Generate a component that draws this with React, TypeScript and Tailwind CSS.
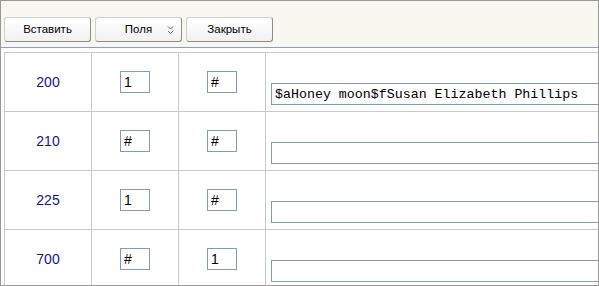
const rows = [
  { tag: "200", ind1: "1", ind2: "#", value: "$aHoney moon$fSusan Elizabeth Phillips" },
  { tag: "210", ind1: "#", ind2: "#", value: "" },
  { tag: "225", ind1: "1", ind2: "#", value: "" },
  { tag: "700", ind1: "#", ind2: "1", value: "" },
];

function ToolButton({ label, menu }: { label: string; menu?: boolean }) {
  return (
    <button className="relative flex h-[25px] w-[87px] items-center justify-center rounded-[3px] border border-[#cfcfcf] border-b-[#8c8c8c] border-r-[#8c8c8c] bg-gradient-to-b from-white to-[#f1f1f1] text-[11.5px] text-black">
      {label}
      {menu && (
        <svg className="absolute right-[7px] top-[7px]" width="7" height="11" viewBox="0 0 7 11">
          <polyline points="1,1.5 3.5,4 6,1.5" fill="none" stroke="#666" strokeWidth="1" />
          <polyline points="1,6 3.5,8.5 6,6" fill="none" stroke="#666" strokeWidth="1" />
        </svg>
      )}
    </button>
  );
}

export default function App() {
  return (
    <div className="h-[286px] w-[599px] overflow-hidden border border-[#999] bg-white font-['Liberation_Sans',Arial,sans-serif]">
      {/* toolbar */}
      <div className="flex h-[46px] items-start gap-[4px] bg-[#f9f8f0] pl-[3px] pt-[16px]">
        <ToolButton label="Вставить" />
        <ToolButton label="Поля" menu />
        <ToolButton label="Закрыть" />
      </div>
      <div className="h-[1px] bg-[#8b9bd6]" />

      {/* fields table */}
      <div className="ml-[3px] mt-[4px] w-[700px] border-l border-t border-[#c9c9c9]">
        {rows.map((r) => (
          <div key={r.tag} className="grid h-[59px] grid-cols-[87px_87px_87px_1fr] border-b border-[#c9c9c9]">
            <div className="flex items-center justify-center border-r border-[#c9c9c9] text-[14px] text-[#14148c]">
              {r.tag}
            </div>
            <div className="flex items-center justify-center border-r border-[#c9c9c9]">
              <input
                readOnly
                value={r.ind1}
                className="h-[22px] w-[30px] border border-[#7f9db9] px-[3px] text-[14px] text-black outline-none"
              />
            </div>
            <div className="flex items-center justify-center border-r border-[#c9c9c9]">
              <input
                readOnly
                value={r.ind2}
                className="h-[22px] w-[30px] border border-[#7f9db9] px-[3px] text-[14px] text-black outline-none"
              />
            </div>
            <div className="flex items-end pb-[6px] pl-[5px]">
              <input
                readOnly
                value={r.value}
                className="h-[22px] w-[420px] border border-[#7f9db9] px-[3px] font-['Liberation_Mono','Courier_New',monospace] text-[13.3px] text-black outline-none"
              />
            </div>
          </div>
        ))}
      </div>
    </div>
  );
}
